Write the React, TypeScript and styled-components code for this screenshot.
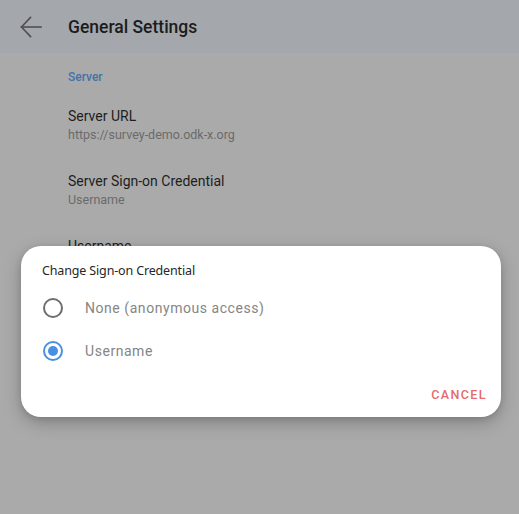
import React from "react";
import styled, { createGlobalStyle } from "styled-components";

const Global = createGlobalStyle`
  html, body { margin: 0; padding: 0; }
  body { background: #aaaaaa; font-family: Roboto, "Noto Sans", sans-serif; }
`;

const Page = styled.div`
  position: relative;
  width: 519px;
  height: 514px;
  overflow: hidden;
  background: #aaaaaa;
`;

const Toolbar = styled.header`
  height: 53px;
  background: #a4a7ab;
  display: flex;
  align-items: center;
`;

const BackButton = styled.div`
  width: 68px;
  display: flex;
  align-items: center;
  padding-left: 19px;
  box-sizing: border-box;
  color: #4e5052;
`;

const Title = styled.h1`
  margin: 0;
  font-family: Roboto, sans-serif;
  font-weight: 500;
  font-size: 17.5px;
  color: #1c1c1c;
`;

const List = styled.div`
  padding-left: 68px;
  padding-top: 16px;
`;

const Category = styled.div`
  font-size: 12px;
  font-weight: 500;
  color: #4273ab;
  line-height: 16px;
  margin-bottom: 22px;
`;

const Pref = styled.div`
  height: 65px;
  display: flex;
  flex-direction: column;
`;

const PrefTitle = styled.div`
  font-size: 14px;
  color: #1e1e1e;
  line-height: 19px;
`;

const PrefSummary = styled.div`
  font-size: 12.5px;
  color: #6a6a6a;
  line-height: 17px;
`;

const Overlay = styled.div`
  position: absolute;
  inset: 0;
  display: flex;
  justify-content: flex-start;
  align-items: flex-start;
  padding: 246px 0 0 21px;
`;

const Dialog = styled.div`
  width: 480px;
  height: 171px;
  box-sizing: border-box;
  background: #ffffff;
  border-radius: 20px;
  box-shadow: 0 6px 18px rgba(0, 0, 0, 0.22), 0 2px 6px rgba(0, 0, 0, 0.12);
  padding: 16px 14px 0 21px;
  display: flex;
  flex-direction: column;
`;

const DialogTitle = styled.div`
  font-family: "Noto Sans", sans-serif;
  font-size: 12.5px;
  color: #262626;
  line-height: 18px;
  letter-spacing: -0.15px;
`;

const Options = styled.div`
  display: flex;
  flex-direction: column;
  margin-top: 6px;
`;

const Option = styled.div`
  height: 43px;
  display: flex;
  align-items: center;
`;

const Radio = styled.span<{ $checked?: boolean }>`
  width: 20px;
  height: 20px;
  box-sizing: border-box;
  margin-left: 1px;
  border-radius: 50%;
  border: 2px solid ${(p) => (p.$checked ? "#4a90e2" : "#6e6e6e")};
  display: flex;
  align-items: center;
  justify-content: center;
  &::after {
    content: "";
    width: 10px;
    height: 10px;
    border-radius: 50%;
    background: ${(p) => (p.$checked ? "#4a90e2" : "transparent")};
  }
`;

const OptionLabel = styled.span`
  margin-left: 22px;
  font-family: Roboto, sans-serif;
  font-size: 14px;
  color: #858585;
  letter-spacing: 0.55px;
`;

const Actions = styled.div`
  display: flex;
  justify-content: flex-end;
  margin-top: 15px;
`;

const TextButton = styled.button`
  background: none;
  border: none;
  padding: 0;
  font-family: Roboto, sans-serif;
  font-weight: 500;
  font-size: 12.5px;
  letter-spacing: 1.4px;
  color: #e36c6c;
  line-height: 16px;
`;

export default function App() {
  return (
    <Page>
      <Global />
      <Toolbar>
        <BackButton>
          <svg width="24" height="24" viewBox="0 0 24 24" fill="none" stroke="currentColor" strokeWidth="1.6" strokeLinecap="square">
            <path d="M22 12H2.5" />
            <path d="M11.5 2.5L2.5 12l9 9.5" />
          </svg>
        </BackButton>
        <Title>General Settings</Title>
      </Toolbar>
      <List>
        <Category>Server</Category>
        <Pref>
          <PrefTitle>Server URL</PrefTitle>
          <PrefSummary>https://survey-demo.odk-x.org</PrefSummary>
        </Pref>
        <Pref>
          <PrefTitle>Server Sign-on Credential</PrefTitle>
          <PrefSummary>Username</PrefSummary>
        </Pref>
        <Pref>
          <PrefTitle>Username</PrefTitle>
          <PrefSummary>&nbsp;</PrefSummary>
        </Pref>
      </List>
      <Overlay>
        <Dialog>
          <DialogTitle>Change Sign-on Credential</DialogTitle>
          <Options>
            <Option>
              <Radio />
              <OptionLabel>None (anonymous access)</OptionLabel>
            </Option>
            <Option>
              <Radio $checked />
              <OptionLabel>Username</OptionLabel>
            </Option>
          </Options>
          <Actions>
            <TextButton>CANCEL</TextButton>
          </Actions>
        </Dialog>
      </Overlay>
    </Page>
  );
}
